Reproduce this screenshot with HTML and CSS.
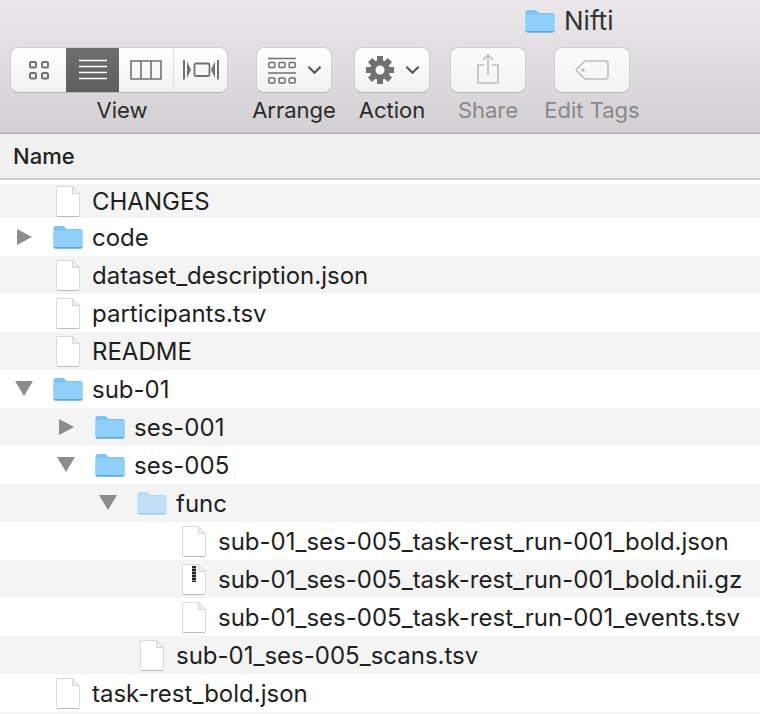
FILE: index.html
```html
<!DOCTYPE html>
<html lang="en">
<head>
    <meta charset="UTF-8">
    <title>Nifti</title>
    <link rel="stylesheet" href="styles.css">
</head>
<body>

<svg class="defs" width="0" height="0">
    <symbol id="folder" viewBox="0 0 30 24">
        <path d="M.5 3.5Q.5 1 3 1H9.5Q11 1 12 2.2L13 3.4Q13.6 4 14.5 4H27.5Q29.5 4 29.5 6V21.5Q29.5 23.5 27.5 23.5H2.5Q.5 23.5 .5 21.5Z" fill="#7cc3f3"/>
        <path d="M.5 7Q.5 5.2 2.3 5.2H27.7Q29.5 5.2 29.5 7V21.5Q29.5 23.5 27.5 23.5H2.5Q.5 23.5 .5 21.5Z" fill="#8fd0fa"/>
        <path d="M.5 22H29.5V21.8Q29.5 23.5 27.5 23.5H2.5Q.5 23.5 .5 21.8Z" fill="#5fa5d8"/>
    </symbol>
    <symbol id="file" viewBox="0 0 24 31">
        <path d="M1 .5H16.5L23.5 7.5V29Q23.5 30.5 22 30.5H2Q.5 30.5 .5 29V1Q.5 .5 1 .5Z" fill="#fff" stroke="#dadada"/>
        <path d="M16.5 .5V7.5H23.5Z" fill="#f0f0f0" stroke="#d6d6d6" stroke-linejoin="round"/>
        <path d="M1 30.5H23" stroke="#bdbdbd"/>
    </symbol>
    <symbol id="chevron" viewBox="0 0 16 10">
        <path d="M1.5 1.5L8 8L14.5 1.5" fill="none" stroke="#555" stroke-width="2.2"/>
    </symbol>
</svg>

<div class="window">
    <header class="toolbar">
        <div class="title">
            <svg class="folder"><use href="#folder"/></svg>
            <span>Nifti</span>
        </div>
        <div class="tools">
            <div class="tool tool-view">
                <div class="segments">
                    <div class="seg seg-icons">
                        <svg width="32" height="22" viewBox="0 0 32 22"><g fill="none" stroke="#717171" stroke-width="2"><rect x="7" y="3" width="6" height="5.500" rx="1.500"/><rect x="19" y="3" width="6" height="5.500" rx="1.500"/><rect x="7" y="14" width="6" height="5.500" rx="1.500"/><rect x="19" y="14" width="6" height="5.500" rx="1.500"/></g></svg>
                    </div>
                    <div class="seg seg-list">
                        <svg width="30" height="22" viewBox="0 0 30 22"><path d="M1 1.500H29M1 7.500H29M1 13.500H29M1 19.500H29" stroke="#fff" stroke-width="1.500"/></svg>
                    </div>
                    <div class="seg seg-columns">
                        <svg width="32" height="20" viewBox="0 0 32 20"><path d="M1 1H31V19H1ZM11 1V19M21 1V19" fill="none" stroke="#717171" stroke-width="1.600"/></svg>
                    </div>
                    <div class="seg seg-flow">
                        <svg width="36" height="22" viewBox="0 0 36 22"><path d="M1 1V20.500M35 1V20.500" stroke="#717171" stroke-width="2"/><rect x="11.500" y="4.500" width="15" height="12.500" rx="1.500" fill="none" stroke="#717171" stroke-width="1.800"/><path d="M4 2.500L8 10.800L4 19ZM32 2.500L28 10.800L32 19Z" fill="#717171"/></svg>
                    </div>
                </div>
                <span class="tool-label">View</span>
            </div>
            <div class="tool tool-arrange">
                <div class="btn">
                    <svg width="28" height="28" viewBox="0 0 28 28"><g fill="none" stroke="#717171" stroke-width="1.500"><path d="M0 2.500H28M0 17H28"/><rect x=".8" y="6.500" width="6" height="5" rx="1"/><rect x="11" y="6.500" width="6" height="5" rx="1"/><rect x="21.200" y="6.500" width="6" height="5" rx="1"/><rect x=".8" y="22" width="6" height="5" rx="1"/><rect x="11" y="22" width="6" height="5" rx="1"/><rect x="21.200" y="22" width="6" height="5" rx="1"/></g></svg>
                    <svg class="chevron"><use href="#chevron"/></svg>
                </div>
                <span class="tool-label">Arrange</span>
            </div>
            <div class="tool tool-action">
                <div class="btn">
                    <svg width="28" height="28" viewBox="0 0 28 28"><path d="M14 0V28M0 14H28M4.100 4.100L23.900 23.900M23.900 4.100L4.100 23.900" stroke="#717171" stroke-width="6"/><circle cx="14" cy="14" r="10" fill="#717171"/><circle cx="14" cy="14" r="4.500" fill="#f8f8f8"/></svg>
                    <svg class="chevron"><use href="#chevron"/></svg>
                </div>
                <span class="tool-label">Action</span>
            </div>
            <div class="tool tool-share off">
                <div class="btn">
                    <svg class="share-icon" width="22" height="30" viewBox="0 0 22 30"><path d="M7 11H1V29H21V11H15M11 21V1M6 6L11 1L16 6" fill="none" stroke="#bdbdbd" stroke-width="1.600"/></svg>
                </div>
                <span class="tool-label">Share</span>
            </div>
            <div class="tool tool-tags off">
                <div class="btn">
                    <svg width="34" height="20" viewBox="0 0 34 20"><path d="M10 1H30Q33 1 33 4V16Q33 19 30 19H10L1 10Z" fill="none" stroke="#bdbdbd" stroke-width="1.600" stroke-linejoin="round"/><circle cx="8" cy="10" r="1.800" fill="#bdbdbd"/></svg>
                </div>
                <span class="tool-label">Edit Tags</span>
            </div>
        </div>
    </header>

    <div class="col-header">Name</div>

    <ul class="list">
        <li class="row d0"><span class="twisty"></span><svg class="icon file"><use href="#file"/></svg><span>CHANGES</span></li>
        <li class="row d0"><span class="twisty closed"></span><svg class="icon folder"><use href="#folder"/></svg><span>code</span></li>
        <li class="row d0"><span class="twisty"></span><svg class="icon file"><use href="#file"/></svg><span>dataset_description.json</span></li>
        <li class="row d0"><span class="twisty"></span><svg class="icon file"><use href="#file"/></svg><span>participants.tsv</span></li>
        <li class="row d0"><span class="twisty"></span><svg class="icon file"><use href="#file"/></svg><span>README</span></li>
        <li class="row d0"><span class="twisty open"></span><svg class="icon folder"><use href="#folder"/></svg><span>sub-01</span></li>
        <li class="row d1"><span class="twisty closed"></span><svg class="icon folder"><use href="#folder"/></svg><span>ses-001</span></li>
        <li class="row d1"><span class="twisty open"></span><svg class="icon folder"><use href="#folder"/></svg><span>ses-005</span></li>
        <li class="row d2"><span class="twisty open"></span><svg class="icon folder faded"><use href="#folder"/></svg><span>func</span></li>
        <li class="row d3"><span class="twisty"></span><svg class="icon file"><use href="#file"/></svg><span>sub-01_ses-005_task-rest_run-001_bold.json</span></li>
        <li class="row d3"><span class="twisty"></span><span class="zip"><svg class="icon file"><use href="#file"/></svg><i class="zipper"></i></span><span>sub-01_ses-005_task-rest_run-001_bold.nii.gz</span></li>
        <li class="row d3"><span class="twisty"></span><svg class="icon file"><use href="#file"/></svg><span>sub-01_ses-005_task-rest_run-001_events.tsv</span></li>
        <li class="row d2"><span class="twisty"></span><svg class="icon file"><use href="#file"/></svg><span>sub-01_ses-005_scans.tsv</span></li>
        <li class="row d0"><span class="twisty"></span><svg class="icon file"><use href="#file"/></svg><span>task-rest_bold.json</span></li>
    </ul>
</div>

</body>
</html>
```
FILE: styles.css
```css
/* Finder window */
body {
    margin: 0;
    background: #fff;
    font-family: Inter, "Liberation Sans", Arial, sans-serif;
    color: #222;
}

.defs {
    position: absolute;
}

.window {
    width: 760px;
    height: 714px;
    overflow: hidden;
    background: #f4f4f4;
}

/* Toolbar */
.toolbar {
    box-sizing: border-box;
    height: 134px;
    padding-top: 8px;
    background: linear-gradient(#eae8ea, #d2d0d2);
    border-bottom: 1px solid #a9a7a9;
}

.title {
    display: flex;
    align-items: center;
    height: 25px;
    padding-left: 525px;
    font-size: 26px;
    color: #333;
}

.title .folder {
    width: 30px;
    height: 24px;
    margin-right: 9px;
}

.tools {
    display: flex;
    margin-top: 14px;
    padding-left: 10px;
}

.tool {
    display: flex;
    flex-direction: column;
    align-items: center;
    width: 76px;
}

.tool-view {
    width: 218px;
}

.tool-view .tool-label {
    padding-left: 6px;
}

.tool-arrange {
    margin-left: 28px;
}

.tool-action {
    margin-left: 22px;
}

.tool-share {
    margin-left: 20px;
}

.tool-tags {
    margin-left: 28px;
}

.tool-label {
    margin-top: 4px;
    font-size: 22px;
    line-height: 26px;
    white-space: nowrap;
    color: #2b2b2b;
}

.off .tool-label {
    color: #8a888a;
}

.btn, .segments {
    box-sizing: border-box;
    display: flex;
    align-items: center;
    justify-content: center;
    height: 46px;
    width: 100%;
    background: linear-gradient(#fff, #f1f1f1);
    border: 1px solid #cfcdcf;
    border-bottom-color: #b9b7b9;
    border-radius: 8px;
}

.btn .chevron {
    width: 15px;
    height: 10px;
    margin-left: 11px;
}

.tool-arrange .btn, .tool-action .btn {
    justify-content: flex-start;
    padding-left: 11px;
}

.share-icon {
    margin-bottom: 2px;
}

.off .btn {
    background: linear-gradient(#fbfbfb, #f3f3f3);
}

.segments {
    overflow: hidden;
    justify-content: flex-start;
}

.seg {
    display: flex;
    align-items: center;
    justify-content: center;
    height: 100%;
}

.seg-icons {
    width: 55px;
}

.seg-list {
    width: 53px;
    background: linear-gradient(#6f6f6f, #5e5e5e);
}

.seg-columns {
    width: 54px;
    border-right: 1px solid #dcdcdc;
}

.seg-flow {
    flex: 1;
}

/* Column header */
.col-header {
    box-sizing: border-box;
    height: 46px;
    padding-left: 13px;
    line-height: 45px;
    font-size: 22px;
    font-weight: 500;
    color: #222;
    background: #f1f1f1;
    border-bottom: 2px solid #c9c9c9;
}

/* File list */
.list {
    list-style: none;
    margin: 0;
    padding: 0;
    background: #fff;
    padding-top: 4px;
}

.row {
    display: flex;
    align-items: center;
    height: 38px;
    font-size: 24px;
    white-space: nowrap;
    color: #1f1f1f;
}

.row:first-child {
    height: 34px;
}

.row:nth-child(odd) {
    background: #f4f4f4;
}

.d0 { padding-left: 12px; }
.d1 { padding-left: 54px; }
.d2 { padding-left: 96px; }
.d3 { padding-left: 138px; }

.twisty {
    box-sizing: border-box;
    flex: none;
    width: 41px;
    height: 18px;
    padding-left: 5px;
}

.twisty.closed::before {
    content: "";
    display: block;
    width: 0;
    height: 0;
    margin-top: 1px;
    border-left: 15px solid #8c8c8c;
    border-top: 8px solid transparent;
    border-bottom: 8px solid transparent;
}

.twisty.open::before {
    content: "";
    display: block;
    width: 0;
    height: 0;
    margin-top: 1px;
    margin-left: -2px;
    border-top: 15px solid #8c8c8c;
    border-left: 9px solid transparent;
    border-right: 9px solid transparent;
}

.icon {
    flex: none;
    margin-right: 9px;
}

.icon.folder {
    width: 30px;
    height: 24px;
}

.icon.file {
    width: 24px;
    height: 31px;
    margin-left: 3px;
    margin-right: 12px;
}

.faded {
    opacity: 0.5;
}

.zip {
    position: relative;
    display: flex;
}

.zipper {
    position: absolute;
    left: 13px;
    top: 2px;
    width: 4px;
    height: 16px;
    background: repeating-linear-gradient(#222 0 2px, #999 2px 3px);
}
```
